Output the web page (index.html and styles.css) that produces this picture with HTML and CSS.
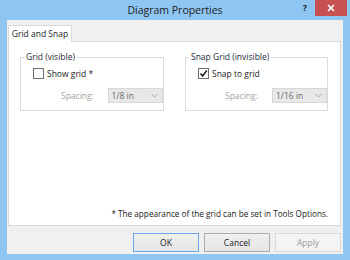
FILE: index.html
```html
<!DOCTYPE html>
<html>
<head>
<meta charset="utf-8">
<link rel="stylesheet" href="styles.css">
</head>
<body>
<div class="window">
  <div class="titlebar">
    <div></div>
    <div class="title">Diagram Properties</div>
    <div class="controls">
      <span class="help">?</span>
      <span class="close">
        <svg width="8" height="8" viewBox="0 0 8 8"><path d="M1 1 L7 7 M7 1 L1 7" stroke="#fff" stroke-width="1.6"/></svg>
      </span>
    </div>
  </div>
  <div class="client">
    <div class="tabs"><div class="tab">Grid and Snap</div></div>
    <div class="page">
      <div class="groups">
        <fieldset class="group g1">
          <legend>Grid (visible)</legend>
          <div class="check"><span class="box"></span><span>Show grid *</span></div>
          <div class="spacing">
            <span class="lbl">Spacing:</span>
            <div class="combo"><span>1/8 in</span><svg width="7" height="5" viewBox="0 0 7 5"><path d="M0.5 1 L3.5 4 L6.5 1" fill="none" stroke="#a8a8a8" stroke-width="1"/></svg></div>
          </div>
        </fieldset>
        <fieldset class="group g2">
          <legend>Snap Grid (invisible)</legend>
          <div class="check"><span class="box"><svg width="9" height="9" viewBox="0 0 9 9"><path d="M1.5 4.5 L3.6 7 L7.8 1.5" fill="none" stroke="#222" stroke-width="1.6"/></svg></span><span>Snap to grid</span></div>
          <div class="spacing">
            <span class="lbl">Spacing:</span>
            <div class="combo"><span>1/16 in</span><svg width="7" height="5" viewBox="0 0 7 5"><path d="M0.5 1 L3.5 4 L6.5 1" fill="none" stroke="#a8a8a8" stroke-width="1"/></svg></div>
          </div>
        </fieldset>
      </div>
      <div class="note">* The appearance of the grid can be set in Tools Options.</div>
    </div>
    <div class="buttons">
      <div class="btn default">OK</div>
      <div class="btn">Cancel</div>
      <div class="btn disabled">Apply</div>
    </div>
  </div>
</div>
</body>
</html>
```
FILE: styles.css
```css
html, body {
  margin: 0;
  padding: 0;
}
body {
  width: 350px;
  height: 260px;
  overflow: hidden;
  background: #8fc5f1;
  font-family: "Open Sans", "Noto Sans", sans-serif;
  font-size: 8.5px;
  color: #1a1a1a;
}
.window {
  width: 350px;
  height: 260px;
  display: flex;
  flex-direction: column;
}
.titlebar {
  height: 20px;
  display: grid;
  grid-template-columns: 1fr auto 1fr;
  align-items: start;
}
.title {
  font-size: 10.5px;
  line-height: 20px;
  color: #1e1e1e;
}
.controls {
  display: flex;
  justify-content: flex-end;
  padding-right: 3px;
}
.help {
  width: 20px;
  height: 16px;
  line-height: 16px;
  text-align: center;
  font-weight: bold;
  font-size: 9px;
  color: #222;
}
.close {
  width: 32px;
  height: 16px;
  background: #c75050;
  display: flex;
  align-items: center;
  justify-content: center;
}
.client {
  margin: 0 7px;
  height: 234px;
  background: #f0f0f0;
  padding: 5px 2px 0 1px;
  box-sizing: border-box;
  display: flex;
  flex-direction: column;
}
.tabs {
  display: flex;
  height: 16px;
}
.tab {
  position: relative;
  z-index: 1;
  width: 64px;
  height: 17px;
  box-sizing: border-box;
  border: 1px solid #d9d9d9;
  border-bottom: none;
  background: #fff;
  text-align: center;
  line-height: 15px;
}
.page {
  height: 185px;
  box-sizing: border-box;
  border: 1px solid #d9d9d9;
  background: #fff;
  display: flex;
  flex-direction: column;
}
.groups {
  display: flex;
  gap: 21px;
  padding: 9px 0 0 11px;
}
.group {
  margin: 0;
  border: 1px solid #dcdcdc;
  padding: 0 0 7px 12px;
  box-sizing: border-box;
  min-width: 0;
}
.g1 { width: 144px; }
.g2 { width: 143px; }
.group legend {
  padding: 0 2px;
  margin-left: -9px;
  line-height: 12px;
  color: #1e2a3a;
}
.check {
  display: flex;
  align-items: center;
  gap: 3px;
  height: 12px;
  margin-top: 4px;
}
.box {
  width: 11px;
  height: 11px;
  box-sizing: border-box;
  border: 1px solid #707070;
  background: #fff;
  display: flex;
  align-items: center;
  justify-content: center;
}
.spacing {
  display: flex;
  align-items: center;
  margin-top: 9px;
}
.lbl {
  width: 48px;
  margin-left: 28px;
  color: #a3a3a3;
}
.g2 .lbl {
  margin-left: 27px;
  width: 49px;
}
.combo {
  width: 57px;
  height: 15px;
  box-sizing: border-box;
  border: 1px solid #d7d7d7;
  background: #e8e8e8;
  display: flex;
  align-items: center;
  justify-content: space-between;
  padding: 0 4px 0 3px;
  color: #6a6a6a;
}
.note {
  margin-top: auto;
  margin-bottom: 5px;
  padding-right: 12px;
  text-align: right;
  line-height: 12px;
  font-size: 8.2px;
}
.buttons {
  display: flex;
  justify-content: flex-end;
  gap: 5px;
  margin-top: 7px;
}
.btn {
  width: 66px;
  height: 19px;
  box-sizing: border-box;
  border: 1px solid #acacac;
  background: linear-gradient(#f0f0f0, #e5e5e5);
  text-align: center;
  line-height: 17px;
  color: #1a1a1a;
}
.btn.default {
  border-color: #68a8e8;
}
.btn.disabled {
  border-color: #d9d9d9;
  background: #f4f4f4;
  color: #9a9a9a;
}
```
